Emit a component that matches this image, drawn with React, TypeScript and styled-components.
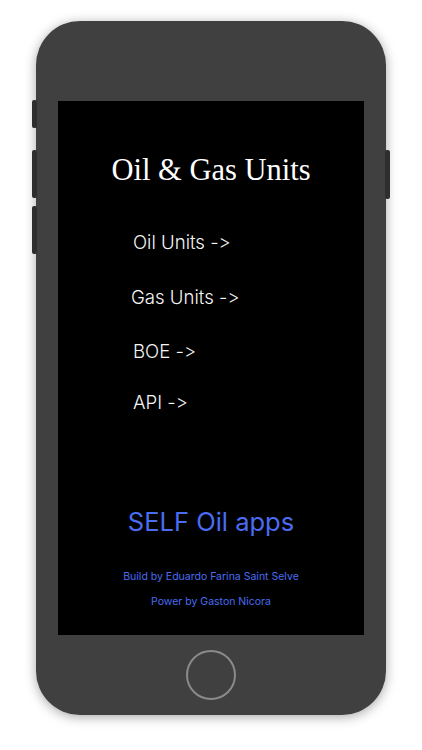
import React from "react";
import styled, { createGlobalStyle } from "styled-components";

const Global = createGlobalStyle`
  html, body { margin: 0; padding: 0; background: #ffffff; }
  body { width: 422px; height: 750px; overflow: hidden; }
`;

const Page = styled.div`
  width: 422px;
  height: 750px;
  display: flex;
  justify-content: center;
  padding-top: 21px;
  box-sizing: border-box;
`;

const Phone = styled.div`
  position: relative;
  width: 350px;
  height: 694px;
  background: #404040;
  border-radius: 44px;
  box-shadow: 0 2px 12px rgba(0, 0, 0, 0.35);
  display: flex;
  flex-direction: column;
  align-items: center;
  padding-top: 80px;
  box-sizing: border-box;
`;

const SideButton = styled.div<{ $side: "left" | "right"; $top: number; $h: number }>`
  position: absolute;
  ${(p) => (p.$side === "left" ? "left: -4px;" : "right: -4px;")}
  top: ${(p) => p.$top}px;
  width: 5px;
  height: ${(p) => p.$h}px;
  background: #2e2e2e;
  border-radius: 2px;
`;

const Screen = styled.div`
  width: 306px;
  height: 534px;
  background: #000;
  display: flex;
  flex-direction: column;
  align-items: stretch;
  box-sizing: border-box;
  padding-top: 52px;
`;

const Title = styled.div`
  font-family: "Liberation Serif", "DejaVu Serif", serif;
  color: #fff;
  font-size: 30.5px;
  text-align: center;
  height: 34px;
  line-height: 34px;
`;

const Menu = styled.div`
  display: flex;
  flex-direction: column;
  margin-top: 44px;
`;

const MenuItem = styled.div<{ $x: number; $h: number }>`
  font-family: Inter, "Open Sans", sans-serif;
  font-weight: 300;
  font-variant-ligatures: none;
  font-feature-settings: "calt" 0, "liga" 0;
  color: #f6f6f6;
  font-size: 18.6px;
  height: ${(p) => p.$h}px;
  line-height: 22px;
  padding-left: ${(p) => p.$x}px;
`;

const Brand = styled.div`
  margin-top: 94px;
  font-family: Inter, "Open Sans", sans-serif;
  color: #4a6cf2;
  font-size: 25.5px;
  text-align: center;
  line-height: 30px;
`;

const Credit = styled.div<{ $mt: number }>`
  margin-top: ${(p) => p.$mt}px;
  font-family: Inter, "Open Sans", sans-serif;
  color: #4a6cf2;
  font-size: 10.5px;
  text-align: center;
  line-height: 14px;
`;

const HomeArea = styled.div`
  flex: 1;
  display: flex;
  align-items: center;
  justify-content: center;
`;

const HomeButton = styled.div`
  width: 46px;
  height: 46px;
  border-radius: 50%;
  border: 2px solid #8a8a8a;
`;

export default function App() {
  return (
    <>
      <Global />
      <Page>
        <Phone>
          <SideButton $side="left" $top={79} $h={28} />
          <SideButton $side="left" $top={129} $h={48} />
          <SideButton $side="left" $top={185} $h={48} />
          <SideButton $side="right" $top={129} $h={49} />
          <Screen>
            <Title>Oil &amp; Gas Units</Title>
            <Menu>
              <MenuItem $x={75} $h={55}>Oil Units -&gt;</MenuItem>
              <MenuItem $x={73} $h={54}>Gas Units -&gt;</MenuItem>
              <MenuItem $x={75} $h={51}>BOE -&gt;</MenuItem>
              <MenuItem $x={75} $h={22}>API -&gt;</MenuItem>
            </Menu>
            <Brand>SELF Oil apps</Brand>
            <Credit $mt={33}>Build by Eduardo Farina Saint Selve</Credit>
            <Credit $mt={11}>Power by Gaston Nicora</Credit>
          </Screen>
          <HomeArea>
            <HomeButton />
          </HomeArea>
        </Phone>
      </Page>
    </>
  );
}
